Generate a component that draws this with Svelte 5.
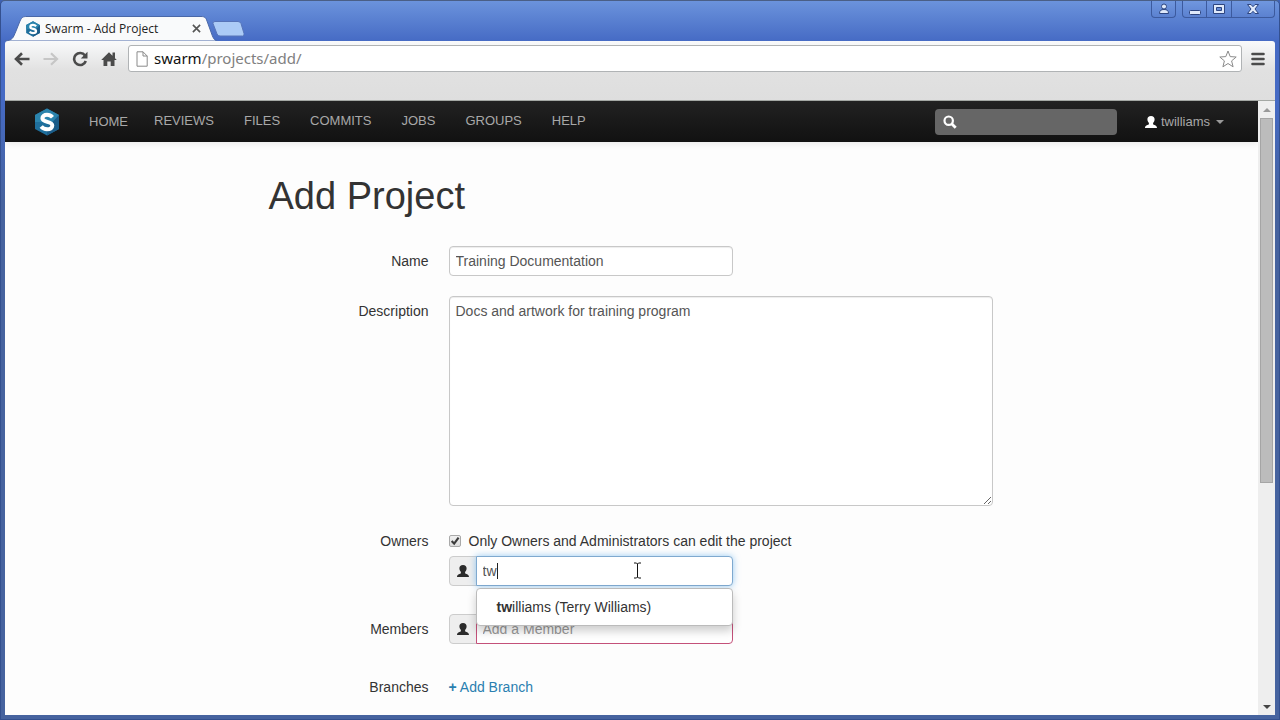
<script lang="ts">
  let name = "Training Documentation";
  let description = "Docs and artwork for training program";
  let ownersOnly = true;
  let owner = "tw";
  let member = "";
  let search = "";
  let url = "swarm/projects/add/";

  const links = ["Reviews", "Files", "Commits", "Jobs", "Groups", "Help"];
  const suggestions = [{ id: "twilliams", fullName: "Terry Williams" }];

  $: host = url.split("/")[0];
  $: path = url.slice(host.length);
</script>

{#snippet logo()}
  <svg class="logo" viewBox="0 0 26 28" aria-hidden="true">
    <path d="M13 0.5 25 7v14L13 27.5 1 21V7z" fill="#1f6f9c" />
    <path d="M13 0.5 25 7v7L1 14V7z" fill="#2b84ad" />
    <path d="M25 7v14l-12 6.5V20z" fill="#1b5c88" />
    <path
      d="M18.500 9.200C17 7.500 15.200 6.700 13 6.700 10.200 6.700 8.400 8.200 8.400 10.300 8.400 15 18.300 12.700 18.300 17.500 18.300 19.900 16.200 21.300 13.200 21.300 10.700 21.300 8.600 20.400 7.200 18.600"
      fill="none"
      stroke="#fff"
      stroke-width="4"
    />
  </svg>
{/snippet}

{#snippet userIcon()}
  <svg class="user-icon" viewBox="0 0 14 14" aria-hidden="true">
    <path
      d="M7 1C4.600 1 3.400 2.400 3.400 4.300c0 1.500.5 2.700 1.500 3.600v1.400C4.400 10.200 1 10 1 13h12c0-3-3.400-2.800-3.900-3.700V7.900c1-.9 1.500-2.100 1.500-3.600C10.600 2.400 9.400 1 7 1z"
      fill="currentColor"
    />
  </svg>
{/snippet}

<div class="window">
  <header class="titlebar">
    <div class="tab">
      <svg class="tab-shape" viewBox="0 0 212 25" aria-hidden="true">
        <path
          d="M0 25C8 24 8 22 11 15L15 5C17 1 18 .5 22 .5H196C200 .5 201 2 202 5L206 16C208 22 209 24 212 25z"
          fill="#f9fafb"
          stroke="#4a68a8"
        />
      </svg>
      <div class="tab-content">
        {@render logo()}
        <span class="tab-title">Swarm - Add Project</span>
        <button class="tab-close" aria-label="Close tab">
          <svg viewBox="0 0 10 10">
            <path d="M1 1l8 8M9 1L1 9" stroke="#555" stroke-width="1.800" />
          </svg>
        </button>
      </div>
    </div>
    <button class="new-tab" aria-label="New tab">
      <svg viewBox="0 0 32 16">
        <path
          d="M3 .5h23q2 0 3 2l3 10q.5 2.500-1.500 2.500H8q-2 0-3-2L1 2.500Q.5.5 3 .5z"
          fill="#abcbf6"
          stroke="#5674b8"
        />
      </svg>
    </button>
    <div class="controls">
      <button class="profile" aria-label="Profile">
        <svg viewBox="0 0 12 12">
          <circle cx="6" cy="3.500" r="2.500" />
          <path d="M1.500 10.500c0-3 1.500-4 4.500-4s4.500 1 4.500 4z" />
        </svg>
      </button>
      <div class="group">
        <button aria-label="Minimize">
          <svg viewBox="0 0 12 12"><rect x=".5" y="7.500" width="11" height="4" rx="1" /></svg>
        </button>
        <button aria-label="Maximize">
          <svg viewBox="0 0 12 12">
            <path fill-rule="evenodd" d="M.5 1.500h11v9H.5zM3.500 4.500v3h5v-3z" />
          </svg>
        </button>
        <button class="close" aria-label="Close">
          <svg viewBox="0 0 12 12">
            <path d="M.5 1.500h3.500l2 2.200 2-2.200h3.500L8 6l3.500 4.500H8L6 8.300l-2 2.200H.5L4 6z" />
          </svg>
        </button>
      </div>
    </div>
  </header>

  <div class="toolbar">
    <button class="tool" aria-label="Back">
      <svg viewBox="0 0 16 16">
        <path d="M15.500 8H2.500M8 2.200L2 8l6 5.800" fill="none" stroke="#4b4b4b" stroke-width="2.600" />
      </svg>
    </button>
    <button class="tool" aria-label="Forward" disabled>
      <svg viewBox="0 0 16 16">
        <path d="M.5 8h13M8 2.200L14 8l-6 5.800" fill="none" stroke="#c6c6c6" stroke-width="2.200" />
      </svg>
    </button>
    <button class="tool" aria-label="Reload">
      <svg viewBox="0 0 16 16">
        <path
          d="M13 4.500A6 6 0 1 0 13.800 10"
          fill="none"
          stroke="#4b4b4b"
          stroke-width="2.600"
        />
        <path d="M15.500.8V7.500H8.800z" fill="#4b4b4b" />
      </svg>
    </button>
    <button class="tool" aria-label="Home">
      <svg viewBox="0 0 16 16">
        <path
          d="M8 1.200l3.500 3.500V1.500H14v5.700l1.800 1.800H13.500v6H9.700v-4.500H6.300V15H2.500V9H.2z"
          fill="#4b4b4b"
        />
      </svg>
    </button>
    <div class="omnibox">
      <svg class="page-icon" viewBox="0 0 12 16" aria-hidden="true">
        <path d="M1 .8h6l4.200 4.200v10.200H1zM7 .8V5h4.200" fill="#fff" stroke="#8a8a8a" />
      </svg>
      <a class="url" href="/projects/add/">{host}<span>{path}</span></a>
      <button class="star" aria-label="Bookmark this page">
        <svg viewBox="0 0 18 18">
          <path
            d="M9 1l2.200 5.600 6 .4-4.600 3.900 1.500 5.900L9 13.500l-5.100 3.300 1.500-5.900L.8 7l6-.4z"
            fill="#fff"
            stroke="#8a8a8a"
            stroke-linejoin="round"
          />
        </svg>
      </button>
    </div>
    <button class="tool menu" aria-label="Menu">
      <svg viewBox="0 0 14 14">
        <path d="M1.500 2h11M1.500 7h11M1.500 12h11" stroke="#4b4b4b" stroke-width="2.600" stroke-linecap="round" />
      </svg>
    </button>
  </div>

  <div class="viewport">
    <div class="page">
      <nav class="navbar">
        <a class="brand" href="/">
          {@render logo()}
          <span>Home</span>
        </a>
        <ul class="links">
          {#each links as link}
            <li><a href="/{link.toLowerCase()}">{link}</a></li>
          {/each}
        </ul>
        <label class="search">
          <svg viewBox="0 0 14 14" aria-hidden="true">
            <circle cx="5.700" cy="5.700" r="4.200" fill="none" stroke="#fff" stroke-width="2.200" />
            <path d="M8.700 8.700l4 4" stroke="#fff" stroke-width="2.800" />
          </svg>
          <input type="search" aria-label="Search" bind:value={search} />
        </label>
        <a class="account" href="/users/twilliams">
          {@render userIcon()}
          <span>twilliams</span>
          <i class="caret"></i>
        </a>
      </nav>

      <form class="container">
        <h1>Add Project</h1>

        <div class="row">
          <label class="row-label" for="name">Name</label>
          <div class="field">
            <input class="text name" id="name" type="text" bind:value={name} />
          </div>
        </div>

        <div class="row">
          <label class="row-label" for="description">Description</label>
          <div class="field">
            <textarea class="text" id="description" spellcheck="false" bind:value={description}></textarea>
          </div>
        </div>

        <div class="row">
          <label class="row-label" for="owner">Owners</label>
          <div class="field">
            <label class="checkbox">
              <input type="checkbox" bind:checked={ownersOnly} />
              <svg viewBox="0 0 12 12" aria-hidden="true">
                {#if ownersOnly}
                  <path d="M2 6l3 3.200L10.300 2" fill="none" stroke="#3c3c3c" stroke-width="2.600" />
                {/if}
              </svg>
              Only Owners and Administrators can edit the project
            </label>
            <div class="user-input">
              <span class="addon">{@render userIcon()}</span>
              <input class="text active" id="owner" type="text" autocomplete="off" bind:value={owner} />
              <i class="text-caret"></i>
              <svg class="pointer" viewBox="0 0 9 17" aria-hidden="true">
                <path
                  d="M1 1h2.500l1 1 1-1H8M4.500 2v13M1 16h2.500l1-1 1 1H8"
                  fill="none"
                  stroke="#111"
                />
              </svg>
              <ul class="typeahead">
                {#each suggestions as user}
                  <li>
                    <a href="/users/{user.id}"
                      ><strong>{owner}</strong>{user.id.slice(owner.length)} ({user.fullName})</a
                    >
                  </li>
                {/each}
              </ul>
            </div>
          </div>
        </div>

        <div class="row">
          <label class="row-label" for="member">Members</label>
          <div class="field">
            <div class="user-input">
              <span class="addon">{@render userIcon()}</span>
              <input
                class="text invalid"
                id="member"
                type="text"
                placeholder="Add a Member"
                bind:value={member}
              />
            </div>
          </div>
        </div>

        <div class="row">
          <span class="row-label">Branches</span>
          <div class="field">
            <a class="add-branch" href="#branches"><strong>+</strong> Add Branch</a>
          </div>
        </div>
      </form>
    </div>

    <div class="scrollbar" aria-hidden="true">
      <i class="arrow up"></i>
      <div class="track"><div class="thumb"></div></div>
      <i class="arrow down"></i>
    </div>
  </div>
</div>

<style>
  :global(body) {
    background: #3f62b4;
    font-family: "Liberation Sans", Arial, sans-serif;
    font-size: 14px;
    line-height: 20px;
    color: #333;
  }

  * {
    box-sizing: border-box;
  }

  button {
    padding: 0;
    border: 0;
    background: none;
  }

  a {
    color: inherit;
    text-decoration: none;
  }

  ul {
    margin: 0;
    padding: 0;
    list-style: none;
  }

  svg {
    display: block;
    flex: none;
  }

  .window {
    display: flex;
    flex-direction: column;
    height: 100vh;
    padding: 0 4px 4px;
    background: linear-gradient(#6b93dc, #456ac4 41px, #456ac4 100px, #46639f 200px);
    border: 1px solid #34508f;
    border-top-color: #4a5f86;
    border-radius: 5px 5px 0 0;
  }

  .titlebar {
    display: flex;
    flex: none;
    align-items: flex-end;
    height: 40px;
  }

  .tab {
    position: relative;
    width: 212px;
    height: 25px;
  }

  .tab-shape {
    position: absolute;
    inset: 0;
    width: 212px;
    height: 25px;
  }

  .tab-content {
    position: relative;
    display: flex;
    align-items: center;
    height: 25px;
    padding: 0 16px 0 20px;
  }

  .tab-content .logo {
    width: 16px;
    height: 16px;
  }

  .tab-title {
    flex: 1;
    padding-left: 4px;
    font: 12px/24px "Open Sans", "Noto Sans", sans-serif;
    color: #222;
    white-space: nowrap;
  }

  .tab-close,
  .tab-close svg {
    width: 9px;
    height: 9px;
  }

  .new-tab {
    padding-bottom: 4px;
    margin-left: -5px;
  }

  .new-tab svg {
    width: 32px;
    height: 16px;
  }

  .controls {
    display: flex;
    align-self: flex-start;
    gap: 6px;
    margin-left: auto;
  }

  .controls button {
    display: flex;
    align-items: center;
    justify-content: center;
    width: 25px;
    height: 17px;
    border: 1px solid #3c5a9e;
    border-top: 0;
    background: linear-gradient(#7097df, #5b81d0);
  }

  .controls .profile {
    border-radius: 0 0 4px 4px;
  }

  .controls svg {
    width: 12px;
    height: 12px;
    fill: #dfe9fa;
    stroke: #2d4580;
  }

  .group {
    display: flex;
  }

  .group button:first-child {
    border-radius: 0 0 0 4px;
  }

  .group button + button {
    border-left: 0;
  }

  .controls .close {
    width: 43px;
    border-radius: 0 0 4px 0;
  }

  .toolbar {
    display: flex;
    flex: none;
    align-items: flex-start;
    height: 60px;
    padding: 4px 10px 0 9px;
    background: linear-gradient(#f9fafb, #e1e1e1 50%, #dedede);
    border-bottom: 1px solid #a4a8a4;
    border-radius: 3px 3px 0 0;
  }

  .tool {
    display: flex;
    align-items: center;
    width: 29px;
    height: 27px;
  }

  .tool svg {
    width: 16px;
    height: 16px;
  }

  .omnibox {
    display: flex;
    flex: 1;
    align-items: center;
    height: 27px;
    margin: 0 9px 0 -2px;
    padding: 0 4px 0 7px;
    background: #fff;
    border: 1px solid #b0b3b5;
    border-radius: 3px;
  }

  .page-icon {
    width: 12px;
    height: 16px;
  }

  .url {
    flex: 1;
    margin-left: 6px;
    padding-bottom: 2px;
    font: 15px/20px "Noto Sans", "Open Sans", sans-serif;
    color: #111;
  }

  .url span {
    color: #808080;
  }

  .star svg {
    width: 18px;
    height: 18px;
  }

  .menu {
    width: 14px;
  }

  .menu svg {
    width: 14px;
    height: 14px;
  }

  .viewport {
    display: flex;
    flex: 1;
    min-height: 0;
  }

  .page {
    flex: 1;
    min-width: 0;
    overflow: hidden;
    background: #fdfdfd;
  }

  .navbar {
    display: flex;
    align-items: center;
    height: 41px;
    padding: 0 34px 0 29px;
    background: linear-gradient(#222, #111);
    box-shadow: 0 1px 8px rgba(0, 0, 0, 0.1);
    font-size: 13px;
    color: #a8a8a8;
  }

  .brand {
    display: flex;
    align-items: center;
    gap: 29px;
    text-transform: uppercase;
  }

  .brand .logo {
    width: 26px;
    height: 28px;
  }

  .links {
    display: flex;
    gap: 30px;
    margin-left: 26px;
    padding-bottom: 2px;
    text-transform: uppercase;
  }

  .search {
    display: flex;
    align-items: center;
    width: 182px;
    height: 26px;
    margin-left: auto;
    padding: 0 8px;
    background: #666;
    border-radius: 4px;
  }

  .search svg {
    width: 14px;
    height: 14px;
  }

  .search input {
    flex: 1;
    min-width: 0;
    border: 0;
    outline: 0;
    background: none;
    color: #fff;
  }

  .account {
    display: flex;
    align-items: center;
    gap: 3px;
    margin-left: 27px;
  }

  .user-icon {
    width: 14px;
    height: 14px;
    color: #2b2b2b;
  }

  .account .user-icon {
    color: #fff;
  }

  .caret {
    margin-left: 3px;
    border: 4px solid transparent;
    border-top-color: #999;
    border-bottom: 0;
  }

  .container {
    max-width: 726px;
    margin: 0 auto;
    padding: 34px 2px 0 0;
  }

  h1 {
    margin: 0 0 30px;
    font-size: 38px;
    font-weight: normal;
    line-height: 40px;
  }

  .row {
    display: flex;
    gap: 20px;
    margin-bottom: 20px;
  }

  .row-label {
    flex: none;
    width: 160px;
    padding-top: 5px;
    text-align: right;
  }

  .field {
    flex: 1;
    min-width: 0;
  }

  .text {
    display: block;
    height: 30px;
    padding: 4px 6px;
    border: 1px solid #c8c8c8;
    border-radius: 4px;
    outline: 0;
    background: #fff;
    box-shadow: inset 0 1px 1px rgba(0, 0, 0, 0.075);
    font: inherit;
    color: #555;
  }

  .name {
    width: 284px;
  }

  textarea.text {
    width: 100%;
    height: 210px;
    resize: both;
  }

  .checkbox {
    display: flex;
    align-items: center;
    padding: 5px 0;
  }

  .checkbox input {
    position: absolute;
    opacity: 0;
  }

  .checkbox svg {
    width: 12px;
    height: 12px;
    margin-right: 8px;
    border: 1px solid #a9a9a9;
    border-radius: 2px;
    background: linear-gradient(#f0f0f0, #dcdcdc);
  }

  .user-input {
    position: relative;
    display: flex;
    width: 284px;
    margin-bottom: 8px;
  }

  .addon {
    display: flex;
    align-items: center;
    justify-content: center;
    width: 28px;
    margin-right: -1px;
    border: 1px solid #ccc;
    border-radius: 4px 0 0 4px;
    background: #eee;
  }

  .user-input .text {
    position: relative;
    flex: 1;
    min-width: 0;
    border-radius: 0 4px 4px 0;
  }

  .user-input .active {
    border-color: #7fa9cf;
    box-shadow: 0 0 7px rgba(82, 168, 236, 0.6);
  }

  .user-input .invalid {
    border-color: #c4517a;
  }

  .invalid::placeholder {
    color: #999;
  }

  .text-caret {
    position: absolute;
    top: 7px;
    left: 48px;
    width: 1px;
    height: 16px;
    background: #222;
  }

  .pointer {
    position: absolute;
    top: 6px;
    left: 184px;
    width: 9px;
    height: 17px;
  }

  .typeahead {
    position: absolute;
    z-index: 10;
    top: 32px;
    right: 0;
    left: 27px;
    padding: 8px 0;
    background: #fff;
    border: 1px solid #bbb;
    border-radius: 4px;
    box-shadow: 0 5px 10px rgba(0, 0, 0, 0.2);
  }

  .typeahead a {
    display: block;
    padding: 0 20px;
  }

  .add-branch {
    display: inline-block;
    padding-top: 5px;
    color: #2a7fb0;
  }

  .scrollbar {
    display: flex;
    flex: none;
    flex-direction: column;
    align-items: center;
    width: 17px;
    background: #eee;
  }

  .arrow {
    margin: 7px 0 6px;
    border: 4px solid transparent;
  }

  .up {
    border-top: 0;
    border-bottom-color: #999;
  }

  .down {
    border-bottom: 0;
    border-top-color: #444;
  }

  .track {
    flex: 1;
    width: 13px;
  }

  .thumb {
    height: 63%;
    background: #bcbcbc;
    border: 1px solid #a5a5a5;
  }
</style>
